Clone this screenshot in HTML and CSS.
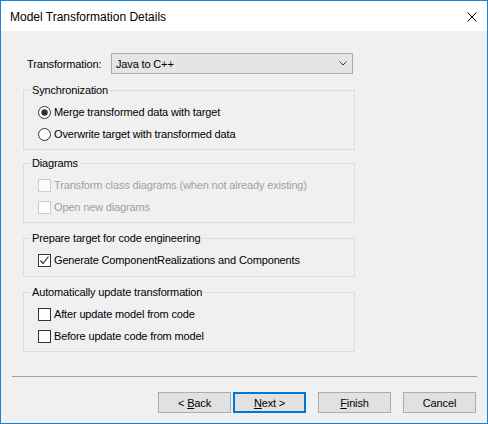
FILE: index.html
```html
<!DOCTYPE html>
<html lang="en">
<head>
    <meta charset="UTF-8">
    <title>Model Transformation Details</title>
    <link rel="stylesheet" href="styles.css">
</head>
<body>
    <div class="window">
        <div class="titlebar">
            <span class="title">Model Transformation Details</span>
            <span class="close">
                <svg width="10" height="10" viewBox="0 0 10 10"><path d="M0.5 0.5L9.5 9.5M9.5 0.5L0.5 9.5" stroke="#000" stroke-width="1"/></svg>
            </span>
        </div>
        <div class="content">
            <div class="field-row">
                <span class="field-label">Transformation:</span>
                <div class="combo">
                    <span>Java to C++</span>
                    <svg width="8" height="5" viewBox="0 0 8 5"><path d="M0.5 0.5L4 4L7.5 0.5" stroke="#333" fill="none"/></svg>
                </div>
            </div>

            <fieldset class="group first">
                <legend>Synchronization</legend>
                <div class="option">
                    <svg class="radio" width="13" height="13" viewBox="0 0 13 13"><circle cx="6.5" cy="6.5" r="6" fill="#fff" stroke="#333"/><circle cx="6.5" cy="6.5" r="3.2" fill="#333"/></svg>
                    <span>Merge transformed data with target</span>
                </div>
                <div class="option">
                    <svg class="radio" width="13" height="13" viewBox="0 0 13 13"><circle cx="6.5" cy="6.5" r="6" fill="#fff" stroke="#333"/></svg>
                    <span>Overwrite target with transformed data</span>
                </div>
            </fieldset>

            <fieldset class="group tight">
                <legend>Diagrams</legend>
                <div class="option disabled">
                    <span class="check"></span>
                    <span>Transform class diagrams (when not already existing)</span>
                </div>
                <div class="option disabled">
                    <span class="check"></span>
                    <span>Open new diagrams</span>
                </div>
            </fieldset>

            <fieldset class="group short">
                <legend>Prepare target for code engineering</legend>
                <div class="option">
                    <span class="check">
                        <svg width="11" height="11" viewBox="0 0 11 11"><path d="M1.5 5.5L4 8.5L9.5 1.5" stroke="#333" stroke-width="1.2" fill="none"/></svg>
                    </span>
                    <span>Generate ComponentRealizations and Components</span>
                </div>
            </fieldset>

            <fieldset class="group">
                <legend>Automatically update transformation</legend>
                <div class="option">
                    <span class="check"></span>
                    <span>After update model from code</span>
                </div>
                <div class="option">
                    <span class="check"></span>
                    <span>Before update code from model</span>
                </div>
            </fieldset>

            <div class="separator"></div>

            <div class="buttons">
                <button class="btn">&lt; <u>B</u>ack</button>
                <button class="btn default"><u>N</u>ext &gt;</button>
                <button class="btn spaced"><u>F</u>inish</button>
                <button class="btn spaced">Cancel</button>
            </div>
        </div>
    </div>
</body>
</html>
```

FILE: styles.css
```css
body {
    margin: 0;
    font-family: 'Liberation Sans', Arial, sans-serif;
    font-size: 11px;
    letter-spacing: -0.15px;
    color: #000;
}
.window {
    width: 488px;
    height: 424px;
    box-sizing: border-box;
    border: 1px solid #1883d7;
    display: flex;
    flex-direction: column;
    background: #f0f0f0;
}
.titlebar {
    height: 30px;
    background: #fff;
    display: flex;
    align-items: center;
    justify-content: space-between;
    padding: 0 10px 0 9px;
}
.title {
    margin-top: 1px;
    font-size: 12px;
    letter-spacing: 0;
}
.close {
    display: flex;
    margin-top: 1px;
}
.content {
    flex: 1;
    display: flex;
    flex-direction: column;
}
.field-row {
    display: flex;
    align-items: center;
    margin: 22px 0 0 26px;
}
.field-label {
    width: 84px;
}
.combo {
    width: 242px;
    height: 21px;
    box-sizing: border-box;
    border: 1px solid #adadad;
    background: #e5e5e5;
    display: flex;
    align-items: center;
    justify-content: space-between;
    padding: 0 5px 0 4px;
}
.group {
    width: 332px;
    box-sizing: border-box;
    margin: 8px 0 0 22px;
    padding: 4px 0 4px 6px;
    border: 1px solid #dcdcdc;
    min-width: 0;
}
.group.first {
    margin-top: 9px;
}
.group.tight {
    margin-top: 6px;
}
.group.short {
    padding-bottom: 5px;
}
.group legend {
    padding: 0 2px;
    line-height: 14px;
}
.option {
    height: 22px;
    display: flex;
    align-items: center;
    gap: 3px;
    margin-left: 8px;
}
.option.disabled {
    color: #a0a0a0;
}
.check {
    width: 13px;
    height: 13px;
    box-sizing: border-box;
    border: 1px solid #333;
    background: #fff;
    display: flex;
    align-items: center;
    justify-content: center;
}
.disabled .check {
    border-color: #cccccc;
    background: #fcfcfc;
}
.radio {
    display: block;
}
.separator {
    height: 1px;
    background: #a0a0a0;
    margin: 24px 10px 0 11px;
}
.buttons {
    display: flex;
    justify-content: flex-end;
    gap: 2px;
    margin: 15px 11px 0 0;
}
.btn {
    width: 73px;
    height: 21px;
    box-sizing: border-box;
    border: 1px solid #adadad;
    background: #e1e1e1;
    font-family: inherit;
    font-size: 11px;
    letter-spacing: -0.15px;
    color: #000;
    padding: 0;
}
.btn.default {
    border: 2px solid #0078d7;
}
.btn.spaced {
    margin-left: 10px;
}
```
